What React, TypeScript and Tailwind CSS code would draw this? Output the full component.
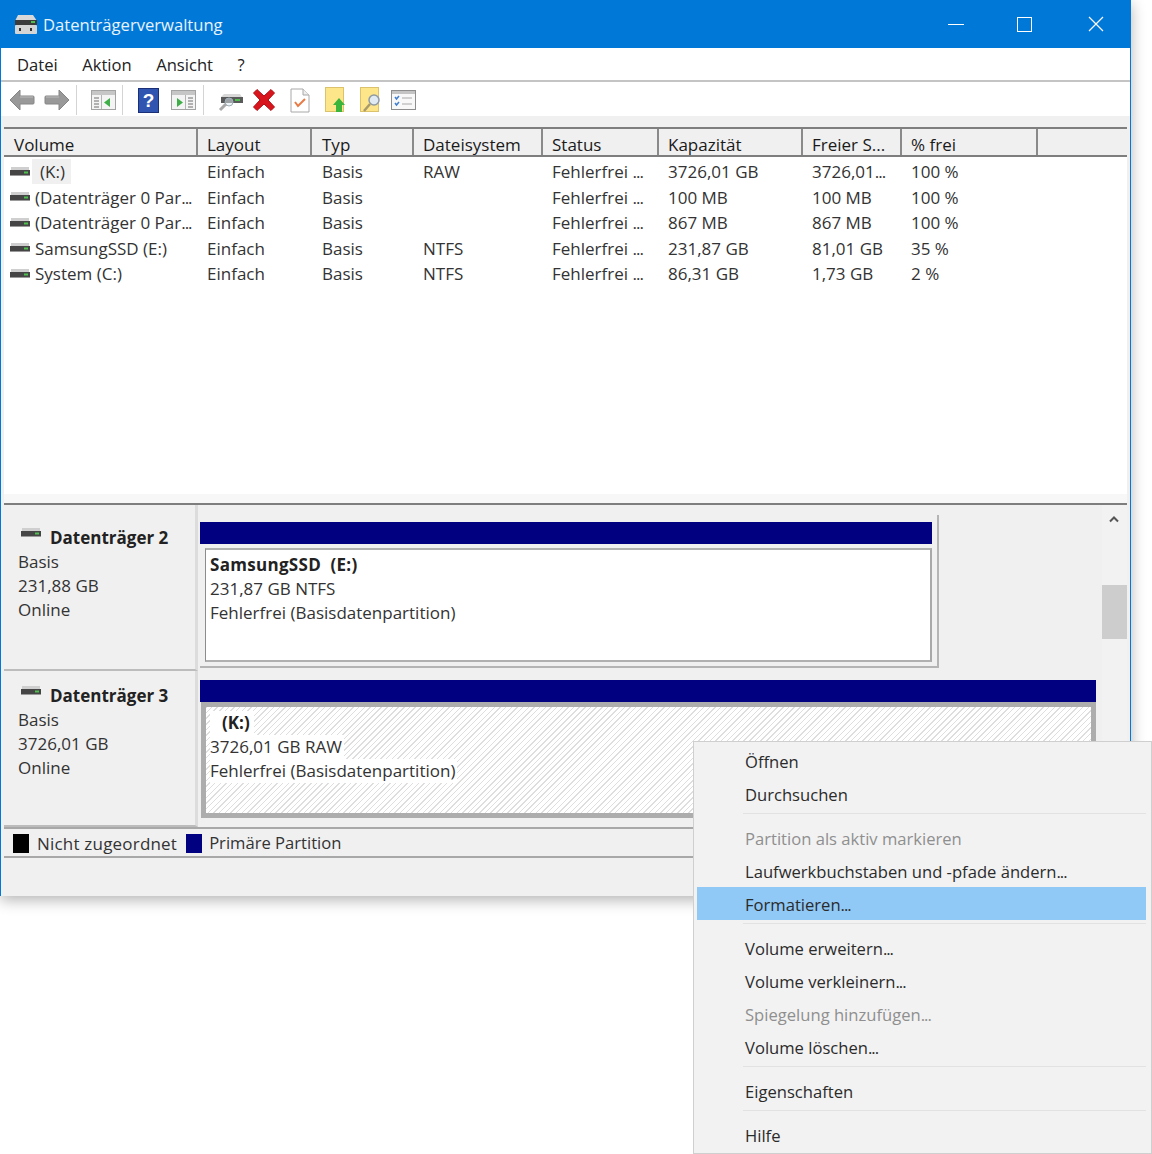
const font = "font-['Open_Sans','Noto_Sans',sans-serif]";

const columns = [
  { name: "Volume", width: "w-[194px]", pad: "pl-[10px]" },
  { name: "Layout", width: "w-[114px]", pad: "pl-[9px]" },
  { name: "Typ", width: "w-[102px]", pad: "pl-[10px]" },
  { name: "Dateisystem", width: "w-[129px]", pad: "pl-[9px]" },
  { name: "Status", width: "w-[116px]", pad: "pl-[9px]" },
  { name: "Kapazität", width: "w-[144px]", pad: "pl-[9px]" },
  { name: "Freier S...", width: "w-[99px]", pad: "pl-[9px]" },
  { name: "% frei", width: "w-[136px]", pad: "pl-[9px]" },
];

const rows = [
  ["(K:)", "Einfach", "Basis", "RAW", "Fehlerfrei ...", "3726,01 GB", "3726,01...", "100 %"],
  ["(Datenträger 0 Par...", "Einfach", "Basis", "", "Fehlerfrei ...", "100 MB", "100 MB", "100 %"],
  ["(Datenträger 0 Par...", "Einfach", "Basis", "", "Fehlerfrei ...", "867 MB", "867 MB", "100 %"],
  ["SamsungSSD (E:)", "Einfach", "Basis", "NTFS", "Fehlerfrei ...", "231,87 GB", "81,01 GB", "35 %"],
  ["System (C:)", "Einfach", "Basis", "NTFS", "Fehlerfrei ...", "86,31 GB", "1,73 GB", "2 %"],
];

// the dots in the reference sit tighter than the font's own
const Dotted = ({ text }: { text: string }) =>
  text.endsWith("...") ? (
    <span>
      {text.slice(0, -3)}
      <span className="tracking-[-1px]">...</span>
    </span>
  ) : (
    <span>{text}</span>
  );

const DriveIcon = ({ className = "" }: { className?: string }) => (
  <svg className={className} width="20" height="12" viewBox="0 0 20 12">
    <rect x="1" y="1" width="18" height="3" fill="#cfcfcf" />
    <rect x="0" y="4" width="20" height="5" fill="#454545" />
    <rect x="14" y="5.5" width="4" height="2" fill="#4fc04f" />
    <rect x="0" y="9" width="20" height="1" fill="#9a9a9a" />
  </svg>
);

const Sep = () => <div className="mx-[3px] h-[30px] w-px bg-[#d4d4d4]" />;

const Arrow = ({ flip, color }: { flip?: boolean; color: string }) => (
  <svg width="26" height="24" viewBox="0 0 26 24" className={flip ? "-scale-x-100" : ""}>
    <path d="M1 12 11 2v6h13a1 1 0 0 1 1 1v6a1 1 0 0 1-1 1H11v6z" fill={color} stroke="#868686" />
    <path d="M11 9h13" stroke="#bdbdbd" />
  </svg>
);

const PaneIcon = ({ flip }: { flip?: boolean }) => (
  <svg width="25" height="22" viewBox="0 0 25 22" className={flip ? "-scale-x-100" : ""}>
    <rect x="0.5" y="1.5" width="24" height="19" fill="#f4f4f4" stroke="#a3a3a3" />
    <rect x="1" y="2" width="23" height="4" fill="#c6c6c6" />
    <path d="M10.5 6v14" stroke="#b4b4b4" />
    <path d="M3 9h5M3 12h5M3 15h5M3 18h5" stroke="#9b9b9b" strokeWidth="1.5" />
    <path d="M19 9v9l-6-4.5z" fill="#3fae49" />
  </svg>
);

const Toolbar = () => (
  <div className="flex h-[34px] items-center bg-white pl-[8px] pt-[2px]">
    <Arrow color="#999999" />
    <div className="w-[9px]" />
    <Arrow flip color="#999999" />
    <div className="w-[3px]" />
    <Sep />
    <div className="w-[11px]" />
    <PaneIcon />
    <div className="w-[3px]" />
    <Sep />
    <div className="w-[12px]" />
    <svg width="21" height="25" viewBox="0 0 21 25">
      <rect x="0.5" y="0.5" width="20" height="24" fill="#2f55b0" stroke="#1b2f78" />
      <text x="10.5" y="19" textAnchor="middle" fontSize="19" fontWeight="700" fill="#fff" fontFamily="Liberation Sans">?</text>
    </svg>
    <div className="w-[12px]" />
    <PaneIcon flip />
    <div className="w-[4px]" />
    <Sep />
    <div className="w-[11px]" />
    <svg width="26" height="24" viewBox="0 0 26 24">
      <path d="M3 9h21l-2-3H6z" fill="#d8d8d8" />
      <rect x="3" y="9" width="22" height="6" fill="#5a5a5a" />
      <rect x="17" y="11" width="5" height="2" fill="#4fc04f" />
      <circle cx="11" cy="14" r="4" fill="#dfeaf2" fillOpacity="0.5" stroke="#9fb0ba" />
      <path d="M2 22 8 16" stroke="#a9a9a9" strokeWidth="3" />
    </svg>
    <div className="w-[8px]" />
    <svg width="24" height="24" viewBox="0 0 24 24">
      <path d="M1.5 5 5 1.500l7 6.500 7-6.500L22.500 5 16 12l6.500 7-3.500 3.500-7-6.500-7 6.500L1.500 19 8 12z" fill="#d8141c" stroke="#b10d14" />
    </svg>
    <div className="w-[14px]" />
    <svg width="20" height="25" viewBox="0 0 20 25">
      <path d="M1 1h12l6 6v17H1z" fill="#fff" stroke="#a8a8a8" />
      <path d="M13 1v6h6" fill="#eee" stroke="#a8a8a8" />
      <path d="m5 14 3 4 7-7" fill="none" stroke="#e87a45" strokeWidth="2" />
    </svg>
    <div className="w-[15px]" />
    <svg width="22" height="26" viewBox="0 0 22 26">
      <rect x="0.5" y="0.5" width="18" height="24" fill="#fde68a" stroke="#dcc26a" />
      <path d="M14 11l6 7h-3v7h-6v-7H8z" fill="#3cb53c" />
    </svg>
    <div className="w-[13px]" />
    <svg width="22" height="26" viewBox="0 0 22 26">
      <rect x="0.5" y="0.5" width="18" height="24" fill="#fde68a" stroke="#dcc26a" />
      <circle cx="14" cy="13" r="5" fill="#dfeaf2" stroke="#8f9aa3" strokeWidth="1.5" />
      <path d="M10 17 4 24" stroke="#a99a6a" strokeWidth="2.5" />
    </svg>
    <div className="w-[9px]" />
    <svg width="25" height="20" viewBox="0 0 25 20">
      <rect x="0.5" y="0.5" width="24" height="19" fill="#f8f8f8" stroke="#8d8d8d" />
      <rect x="1" y="1" width="23" height="3" fill="#c4c4c4" />
      <path d="m4 7 1.500 2L8 6M4 13l1.500 2L8 12" fill="none" stroke="#3f7fd0" strokeWidth="1.500" />
      <path d="M11 8h10M11 14h10" stroke="#a8a8a8" />
    </svg>
  </div>
);

const VolumeList = () => (
  <div className="flex h-[367px] flex-col bg-white">
    <div className="flex h-[30px] border-y-[2px] border-y-[#7e7e7e] bg-[#f0f0f0] text-[#1a1a1a]">
      {columns.map((c) => (
        <div key={c.name} className={`${c.width} ${c.pad} flex items-end border-r-[2px] border-r-[#8a8a8a] leading-[20px]`}>
          {c.name}
        </div>
      ))}
      <div className="flex-1" />
    </div>
    <div className="pt-[2px]">
      {rows.map((row, i) => (
        <div key={i} className="flex h-[25.5px] items-center text-[#333]">
          {row.map((cell, j) => (
            <div key={j} className={`${columns[j].width} ${columns[j].pad} shrink-0 whitespace-nowrap`}>
              {j === 0 ? (
                <div className="-ml-[4px] flex items-center gap-[5px]">
                  <DriveIcon />
                  {i === 0 ? (
                    <span className="-ml-[3px] bg-[#f0f0f0] pl-[8px] pr-[6px] leading-[25px]">{cell}</span>
                  ) : (
                    <Dotted text={cell} />
                  )}
                </div>
              ) : (
                <Dotted text={cell} />
              )}
            </div>
          ))}
        </div>
      ))}
    </div>
  </div>
);

const DiskLabel = ({ name, size, top }: { name: string; size: string; top: string }) => (
  <div className={`h-full w-[194px] shrink-0 border-b-[2px] border-r-[3px] border-b-[#bcbcbc] border-r-[#dcdcdc] pl-[14px] text-[#333] ${top}`}>
    <div className="flex h-[24px] items-center">
      <DriveIcon className="mb-[10px] ml-[3px]" />
      <span className="ml-[9px] font-bold text-[#222]">{name}</span>
    </div>
    <div className="leading-[24px]">Basis</div>
    <div className="leading-[24px]">{size}</div>
    <div className="leading-[24px]">Online</div>
  </div>
);

const DiskArea = () => (
  <div className="flex flex-1 bg-[#f0f0f0]">
    <div className="flex flex-1 flex-col">
      <div className="flex h-[166px]">
        <DiskLabel name="Datenträger 2" size="231,88 GB" top="pt-[21px]" />
        <div className="pl-[2px] pt-[10px]">
          <div className="h-[153px] w-[739px] border-r-[2px] border-b-[2px] border-r-[#b4b4b4] border-b-[#b4b4b4] pr-[5px] pt-[7px]">
            <div className="h-[22px] bg-[#000080]" />
            <div className="mt-[4px] ml-[5px] h-[114px] border-y-[2px] border-r-[2px] border-l border-y-[#b0b0b0] border-r-[#a8a8a8] border-l-[#8c8c8c] bg-white pl-[4px] pt-[3px] text-[#333]">
              <div className="font-bold leading-[24px] tracking-[0.3px] text-[#222]">SamsungSSD&nbsp; (E:)</div>
              <div className="leading-[24px]">231,87 GB NTFS</div>
              <div className="leading-[24px]">Fehlerfrei (Basisdatenpartition)</div>
            </div>
          </div>
        </div>
      </div>
      <div className="flex flex-1">
        <DiskLabel name="Datenträger 3" size="3726,01 GB" top="pt-[13px]" />
        <div className="flex-1 pl-[2px] pr-[6px] pt-[9px]">
          <div className="h-[22px] bg-[#000080]" />
          <div className="ml-[1px] h-[116px] border-[5px] border-[#adadad] bg-[repeating-linear-gradient(-45deg,#dedede_0px,#dedede_1px,#ffffff_1px,#ffffff_4px)] pl-[4px] pt-[4px] text-[#333]">
            <div className="w-fit bg-white pl-[12px] pr-[4px] font-bold leading-[24px] text-[#222]">(K:)</div>
            <div className="w-fit bg-white pr-[2px] leading-[24px]">3726,01 GB RAW</div>
            <div className="w-fit bg-white pr-[2px] leading-[24px]">Fehlerfrei (Basisdatenpartition)</div>
          </div>
        </div>
      </div>
    </div>
    <div className="relative w-[25px] shrink-0 bg-[#f2f2f2]">
      <svg className="absolute left-[6px] top-[10px]" width="12" height="8" viewBox="0 0 12 8">
        <path d="M2 6.500 6 2.500l4 4" fill="none" stroke="#555" strokeWidth="2" />
      </svg>
      <div className="absolute left-0 top-[80px] h-[54px] w-full bg-[#cdcdcd]" />
    </div>
  </div>
);

const Legend = () => (
  <div className="flex h-[31px] items-center border-y-[2px] border-y-[#a8a8a8] bg-[#f0f0f0] pl-[9px] pt-[2px] text-[#333]">
    <div className="h-[19px] w-[16px] bg-black" />
    <span className="ml-[8px] tracking-[0.2px]">Nicht zugeordnet</span>
    <div className="ml-[9px] h-[19px] w-[16px] bg-[#000080]" />
    <span className="ml-[7px] text-[16.6px]">Primäre Partition</span>
  </div>
);

type MenuItem = { label?: string; disabled?: boolean; active?: boolean };

const menu: MenuItem[] = [
  { label: "Öffnen" },
  { label: "Durchsuchen" },
  {},
  { label: "Partition als aktiv markieren", disabled: true },
  { label: "Laufwerkbuchstaben und -pfade ändern..." },
  { label: "Formatieren...", active: true },
  {},
  { label: "Volume erweitern..." },
  { label: "Volume verkleinern..." },
  { label: "Spiegelung hinzufügen...", disabled: true },
  { label: "Volume löschen..." },
  {},
  { label: "Eigenschaften" },
  {},
  { label: "Hilfe" },
];

const ContextMenu = () => (
  <div className="absolute left-[693px] top-[741px] h-[413px] w-[459px] border border-[#cfcfcf] bg-[#f2f2f2] pl-[3px] pr-[5px] pt-[2px] text-[16.6px] text-[#2b2b2b]">
    {menu.map((item, i) =>
      item.label ? (
        <div
          key={i}
          className={`flex h-[33px] items-center pl-[48px] pt-[3px] ${item.disabled ? "text-[#8f8f8f]" : ""} ${item.active ? "bg-[#90c8f6]" : ""}`}
        >
          <Dotted text={item.label} />
        </div>
      ) : (
        <div key={i} className="h-[11px] pl-[46px] pt-[3px]">
          <div className="h-px w-full bg-[#e2e2e2]" />
        </div>
      ),
    )}
  </div>
);

export default function App() {
  return (
    <div className={`relative h-[1154px] w-[1152px] overflow-hidden bg-white text-[17px] ${font}`}>
      <div className="flex h-[896px] w-[1131px] flex-col border-x border-x-[#0078d7] bg-[#f0f0f0] shadow-[0_4px_14px_rgba(0,0,0,0.3)]">
        <div className="flex h-[48px] items-center bg-[#0078d7] text-white">
          <svg className="ml-[13px]" width="24" height="22" viewBox="0 0 24 22">
            <path d="M4 2h15l4 6H1z" fill="#d8d8d8" />
            <rect x="1" y="7" width="22" height="5" fill="#3c3c3c" />
            <rect x="17" y="8" width="4" height="2" fill="#4fc04f" />
            <rect x="1" y="12" width="22" height="9" rx="1" fill="#d5d5d5" />
            <rect x="5" y="15" width="2" height="3" fill="#333" />
            <rect x="16" y="15" width="2" height="3" fill="#333" />
          </svg>
          <span className="ml-[5px] pt-[3px] text-[16.6px] text-[#e8f3fb]">Datenträgerverwaltung</span>
          <div className="ml-auto flex items-center">
            <div className="h-px w-[16px] bg-white" />
            <div className="ml-[53px] h-[15px] w-[15px] border border-white" />
            <svg className="ml-[56px] mr-[26px]" width="16" height="16" viewBox="0 0 16 16">
              <path d="M1 1l14 14M15 1 1 15" stroke="#fff" strokeWidth="1.200" />
            </svg>
          </div>
        </div>
        <div className="flex h-[34px] items-center gap-[24.500px] border-b-[2px] border-b-[#c4c4c4] bg-white pl-[16px] pt-[3px] text-[16.6px] text-[#222]">
          <span>Datei</span>
          <span>Aktion</span>
          <span>Ansicht</span>
          <span>?</span>
        </div>
        <Toolbar />
        <div className="h-[11px] bg-[#f0f0f0]" />
        <div className="flex flex-1 flex-col pl-[3px] pr-[3px]">
          <VolumeList />
          <div className="h-[11px] border-b-[2px] border-b-[#7e7e7e] bg-[#f7f7f7]" />
          <DiskArea />
          <Legend />
        </div>
        <div className="h-[38px] bg-[#f0f0f0]" />
      </div>
      <ContextMenu />
    </div>
  );
}
